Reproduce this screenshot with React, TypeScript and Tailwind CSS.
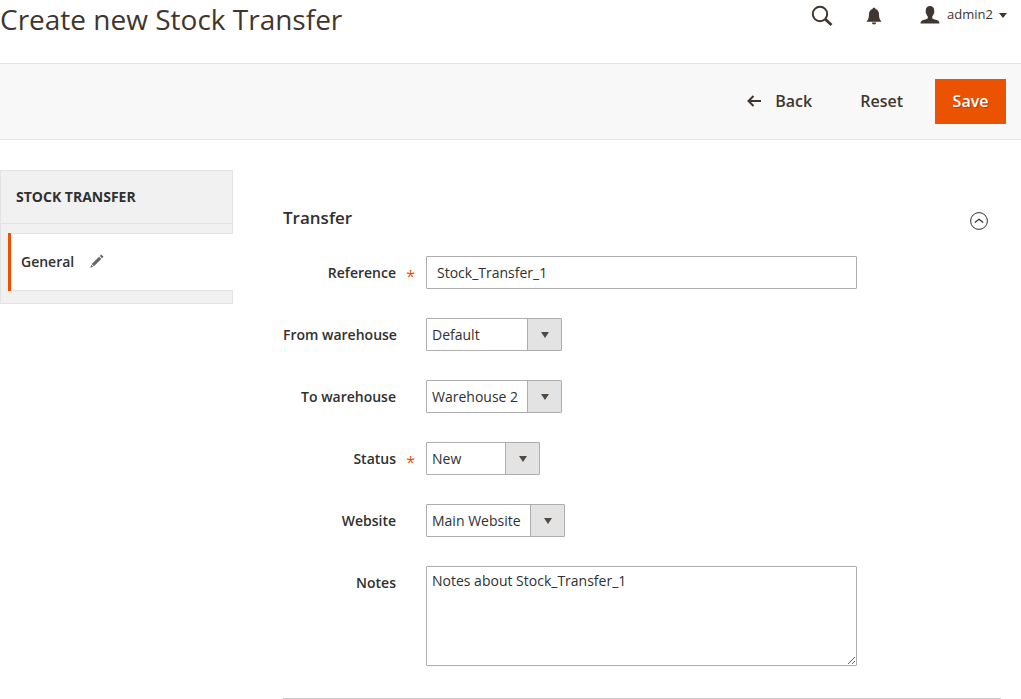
import type { ReactNode } from "react";
import clsx from "clsx";

type FieldProps = {
  id: string;
  label: string;
  required?: boolean;
  children: ReactNode;
};

const Field = ({ id, label, required, children }: FieldProps) => {
  return (
    <div className="flex items-start">
      <label
        htmlFor={id}
        className="relative w-[143px] shrink-0 pr-[30px] text-right text-sm leading-[33px] font-semibold whitespace-nowrap"
      >
        {label}
        {required && (
          <span className="absolute top-1 right-[11px] text-base leading-[33px] font-normal text-[#eb5202]">
            *
          </span>
        )}
      </label>
      {children}
    </div>
  );
};

type SelectProps = {
  id: string;
  options: string[];
  className: string;
};

const Select = ({ id, options, className }: SelectProps) => {
  return (
    <div className={clsx("relative h-[33px]", className)}>
      <select
        id={id}
        className="h-full w-full appearance-none rounded-[1px] border border-[#adadad] bg-white pr-9 pl-[5px] text-sm text-[#303030]"
      >
        {options.map((option) => (
          <option key={option}>{option}</option>
        ))}
      </select>
      <span className="pointer-events-none absolute inset-y-px right-px flex w-[34px] items-center justify-center border-l border-[#adadad] bg-[#e3e3e3]">
        <svg width="8" height="6" viewBox="0 0 8 6" fill="#514943">
          <path d="M0 0h8L4 6z" />
        </svg>
      </span>
    </div>
  );
};

const Header = () => {
  return (
    <header className="flex h-[63px] items-start justify-between pr-3.5">
      <h1 className="text-[28px] leading-[38px] text-[#41362f]">
        Create new Stock Transfer
      </h1>
      <div className="flex h-[30px] items-center text-[#41362f]">
        <button type="button" aria-label="Search" className="mr-[33px] pt-0.5">
          <svg width="22" height="22" viewBox="0 0 22 22" fill="none" stroke="currentColor">
            <circle cx="9" cy="9" r="7.2" strokeWidth="2" />
            <path d="M14 14l6.5 6" strokeWidth="2.8" />
          </svg>
        </button>
        <button type="button" aria-label="Notifications" className="mr-[38px] pt-0.5">
          <svg width="16" height="18" viewBox="0 0 16 18" fill="currentColor">
            <path d="M8 .8c.9 0 1.4.5 1.5 1.1C11.800 2.600 13 4.600 13 7c0 3.800.7 5.600 2.300 7.200v.6H.7v-.6C2.300 12.600 3 10.800 3 7c0-2.400 1.200-4.400 3.500-5.100C6.600 1.300 7.100.8 8 .8z" />
            <path d="M5.800 15.600h4.400C10 16.800 9.200 17.500 8 17.500s-2-.7-2.200-1.900z" />
          </svg>
        </button>
        <button type="button" className="flex items-center text-[13px]">
          <svg width="20" height="18" viewBox="0 0 20 18" fill="currentColor" className="mr-[7px]">
            <path d="M10 0c2.600 0 4.200 1.700 4.200 4.300 0 .5 0 .8-.1 1.200.5.200.4 1.500-.3 2-.3 1.300-.8 2.300-1.600 3.100v1.300c.5 1 1.900 1.300 3.700 1.900 2.300.7 3.600 1.500 3.600 3.700H.5c0-2.200 1.300-3 3.600-3.700 1.800-.6 3.200-.9 3.700-1.900v-1.300C7 9.800 6.500 8.800 6.200 7.500c-.7-.5-.8-1.800-.3-2-.1-.4-.1-.7-.1-1.200C5.800 1.700 7.400 0 10 0z" />
          </svg>
          admin2
          <svg width="8" height="5" viewBox="0 0 8 5" fill="currentColor" className="ml-1.5">
            <path d="M0 0h8L4 5z" />
          </svg>
        </button>
      </div>
    </header>
  );
};

const Toolbar = () => {
  return (
    <div className="flex h-[77px] items-center justify-end border-y border-[#e3e3e3] bg-[#f8f8f8] pr-[15px] text-base font-semibold text-[#41362f]">
      <button type="button" className="mr-12 flex h-[45px] items-center pb-0.5">
        <svg
          width="14"
          height="12"
          viewBox="0 0 14 12"
          fill="none"
          stroke="currentColor"
          strokeWidth="2"
          className="mr-3.5"
        >
          <path d="M14 6H1.500M6.500 1L1.500 6l5 5" />
        </svg>
        Back
      </button>
      <button type="button" className="mr-8 h-[45px] pb-0.5">
        Reset
      </button>
      <button
        type="button"
        className="h-[45px] w-[71px] bg-[#eb5202] pb-0.5 text-white text-shadow-[1px_1px_0_rgba(0,0,0,0.25)]"
      >
        Save
      </button>
    </div>
  );
};

const Sidebar = () => {
  return (
    <nav className="w-[233px] shrink-0 border-l border-[#e3e3e3] bg-[#f1f1f1]">
      <h2 className="border-y border-r border-[#e3e3e3] px-[15px] text-sm leading-[52px] font-bold">
        STOCK TRANSFER
      </h2>
      <div className="h-[9px] border-r border-[#e3e3e3]" />
      <a href="#general" className="ml-[7px] flex h-[58px] text-sm font-semibold">
        <span className="w-[3px] bg-[#eb5202]" />
        <span className="flex grow items-center border-y border-[#e3e3e3] bg-white pl-2.5">
          General
          <svg width="14" height="14" viewBox="0 0 14 14" fill="#666" className="mb-0.5 ml-4">
            <path d="M11.300.5l2.200 2.200-1.500 1.500L9.800 2zM9.100 2.700l2.200 2.200-7.400 7.400-2.200-2.200zM1.200 10.800l2 2L.3 13.700z" />
          </svg>
        </span>
      </a>
      <div className="h-[13px] border-r border-b border-[#e3e3e3]" />
    </nav>
  );
};

const App = () => {
  return (
    <div className="bg-white font-['Open_Sans',sans-serif] text-[#303030]">
      <Header />
      <Toolbar />
      <div className="flex items-start gap-[50px] pt-[30px] pr-5">
        <Sidebar />
        <main className="grow border-b border-[#ccc] pt-9 pb-8">
          <div className="mb-5 flex h-[30px] items-center justify-between pr-[13px]">
            <h2 className="pb-1.5 text-[17px] font-semibold">Transfer</h2>
            <button type="button" aria-label="Collapse section">
              <svg width="18" height="18" viewBox="0 0 18 18" fill="none" stroke="#303030">
                <circle cx="9" cy="9" r="8.400" />
                <path d="M4.800 10.500L9 7.300l4.200 3.200" strokeWidth="1.200" />
              </svg>
            </button>
          </div>
          <form className="flex flex-col gap-[29px]">
            <Field id="reference" label="Reference" required>
              <input
                id="reference"
                type="text"
                defaultValue="Stock_Transfer_1"
                className="h-[33px] w-3/5 rounded-[1px] border border-[#adadad] px-2.5 text-sm"
              />
            </Field>
            <Field id="from" label="From warehouse">
              <Select id="from" options={["Default", "Warehouse 2"]} className="w-[136px]" />
            </Field>
            <Field id="to" label="To warehouse">
              <Select id="to" options={["Warehouse 2", "Default"]} className="w-[136px]" />
            </Field>
            <Field id="status" label="Status" required>
              <Select id="status" options={["New", "Complete"]} className="w-[114px]" />
            </Field>
            <Field id="website" label="Website">
              <Select id="website" options={["Main Website"]} className="w-[139px]" />
            </Field>
            <Field id="notes" label="Notes">
              <textarea
                id="notes"
                defaultValue="Notes about Stock_Transfer_1"
                className="h-[100px] w-3/5 rounded-[1px] border border-[#adadad] px-[5px] py-1 text-sm"
              />
            </Field>
          </form>
        </main>
      </div>
    </div>
  );
};

export default App;
